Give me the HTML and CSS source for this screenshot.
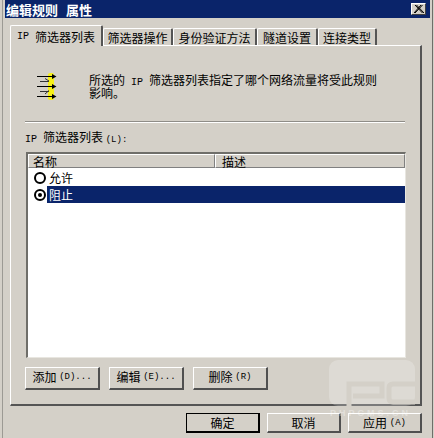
FILE: index.html
```html
<!DOCTYPE html>
<html lang="zh-CN">
<head>
  <meta charset="UTF-8" />
  <title>编辑规则 属性</title>
  <link rel="stylesheet" href="styles.css">
</head>
<body>
  <div class="dialog">
    <div class="titlebar">
      <span class="caption">编辑规则 属性</span>
      <span class="close">
        <svg width="10" height="8" viewBox="0 0 10 8"><path d="M1 0 L8.500 8 M2.500 0 L10 8 M8.500 0 L1 8 M7 0 L0 8" stroke="#000" stroke-width="1" fill="none"/></svg>
      </span>
    </div>

    <div class="tabs">
      <div class="tab active t1"><span class="en">IP </span>筛选器列表</div>
      <div class="tab t2">筛选器操作</div>
      <div class="tab t3">身份验证方法</div>
      <div class="tab t4">隧道设置</div>
      <div class="tab t5">连接类型</div>
    </div>

    <div class="panel">
      <div class="intro">
        <svg class="intro-icon" width="20" height="29" viewBox="0 0 20 29">
          <rect x="11" y="0" width="6" height="27" fill="#f6f018" rx="2"/>
          <path d="M0 3.500 H16 M0 13.500 H16 M0 23.500 H16" stroke="#000" stroke-width="1"/>
          <path d="M15 1 L19.500 3.500 L15 6 Z M15 11 L19.500 13.500 L15 16 Z M15 21 L19.500 23.500 L15 26 Z" fill="#000"/>
          <path d="M3 8.500 H12 M3 18.500 H12 M8 5.500 L12 8 M8 21 L12 17.500" stroke="#333" stroke-width="1" fill="none"/>
        </svg>
        <div class="intro-text">
          <div class="intro-line">所选的<span class="en"> IP </span>筛选器列表指定了哪个网络流量将受此规则</div>
          <div class="intro-line">影响。</div>
        </div>
      </div>
      <div class="rule"></div>
      <div class="list-label"><span class="en">IP </span>筛选器列表 <span class="key">(L):</span></div>

      <div class="list">
        <div class="list-head">
          <div class="col col-name">名称</div>
          <div class="col col-desc">描述</div>
        </div>
        <div class="row">
          <span class="radio"></span>
          <span class="row-text">允许</span>
        </div>
        <div class="row selected">
          <span class="radio on"></span>
          <span class="row-text">阻止</span>
        </div>
      </div>

      <div class="panel-buttons">
        <div class="btn b-small">添加 <span class="key">(D)...</span></div>
        <div class="btn b-small">编辑 <span class="key">(E)...</span></div>
        <div class="btn b-small">删除 <span class="key">(R)</span></div>
      </div>
    </div>

    <div class="footer">
      <div class="btn b-main default">确定</div>
      <div class="btn b-main">取消</div>
      <div class="btn b-main">应用 <span class="key">(A)</span></div>
    </div>
  </div>

  <svg class="watermark" width="90" height="60" viewBox="0 0 90 60">
    <rect x="0" y="0" width="86" height="46" rx="9" fill="#fff" opacity="0.22"/>
    <path d="M20 46 V24 H53 V36 H24 M86 24 H64 Q60 24 60 28 V38 Q60 42 64 42 H86" fill="none" stroke="#d4d0c8" stroke-width="5"/>
    <text x="1" y="56" class="wm-text">PHPCMS.CN</text>
  </svg>
</body>
</html>
```

FILE: styles.css
```css
html, body {
  margin: 0;
  padding: 0;
  width: 434px;
  height: 438px;
  overflow: hidden;
}
body {
  background: #d4d0c8;
  font-family: "Noto Sans CJK SC", "Liberation Sans", sans-serif;
  font-size: 12px;
  line-height: 12px;
  color: #000;
  position: relative;
}
.en {
  font-family: "Liberation Mono", monospace;
  font-size: 10px;
  white-space: pre;
}
.key {
  font-family: "Liberation Mono", monospace;
  font-size: 9px;
  white-space: pre;
}
.dialog {
  box-sizing: border-box;
  width: 431px;
  height: 438px;
  margin-left: 2px;
  padding: 0 10px 0 2px;
  border-left: 1px solid #9c9a94;
  border-right: 1px solid #6f6e69;
}
.titlebar {
  height: 18px;
  margin-right: -8px;
  background: #0a246a;
  display: flex;
  align-items: center;
  justify-content: space-between;
  padding: 0 4px 0 1px;
}
.caption {
  color: #fff;
  font-size: 13px;
  font-weight: bold;
  line-height: 15px;
  word-spacing: 5px;
}
.close {
  width: 15px;
  height: 12px;
  background: #d4d0c8;
  border: 1px solid;
  border-color: #fff #404040 #404040 #fff;
  box-sizing: border-box;
  display: flex;
  align-items: center;
  justify-content: center;
}

/* tabs */
.tabs {
  display: flex;
  align-items: flex-end;
  height: 27px;
  padding-left: 5px;
  box-sizing: border-box;
  position: relative;
  z-index: 2;
}
.tab {
  box-sizing: border-box;
  height: 17px;
  padding-top: 1px;
  border-top: 1px solid #fff;
  border-left: 1px solid #fff;
  border-right: 2px solid #555;
  border-radius: 2px 2px 0 0;
  display: flex;
  align-items: center;
  justify-content: center;
}
.tab.active {
  height: 21px;
  padding-top: 2px;
  margin-bottom: -1px;
  background: #d4d0c8;
}
.t1 { width: 93px; }
.t2 { width: 70px; }
.t3 { width: 84px; }
.t4 { width: 61px; }
.t5 { width: 59px; }

/* panel */
.panel {
  box-sizing: border-box;
  height: 361px;
  margin-left: 5px;
  padding: 0 15px;
  border-top: 1px solid #fff;
  border-left: 1px solid #fff;
  border-right: 2px solid #555;
  border-bottom: 2px solid #555;
}
.intro {
  display: flex;
  height: 75px;
  padding-top: 27px;
  box-sizing: border-box;
}
.intro-icon {
  margin-left: 11px;
  flex: none;
}
.intro-text {
  margin-left: 32px;
  padding-top: 1px;
  white-space: nowrap;
}
.intro-line {
  height: 12px;
  margin-bottom: 1px;
}
.rule {
  border-top: 1px solid #8f8d88;
  border-bottom: 1px solid #fff;
  margin-left: -1px;
}
.list-label {
  margin-top: 8px;
  height: 12px;
  margin-left: -1px;
}
.list {
  box-sizing: border-box;
  width: 380px;
  height: 206px;
  margin-top: 9px;
  background: #fff;
  border-top: 2px solid #6f6e69;
  border-left: 2px solid #6f6e69;
  border-right: 1px solid #e8e6e0;
  border-bottom: 1px solid #e8e6e0;
}
.list-head {
  display: flex;
  height: 14px;
  margin-bottom: 1px;
  background: #d4d0c8;
}
.col {
  box-sizing: border-box;
  border-top: 1px solid #fff;
  border-left: 1px solid #fff;
  border-right: 1px solid #808080;
  border-bottom: 1px solid #808080;
  padding-left: 4px;
  line-height: 13px;
  height: 14px;
}
.col-name { width: 187px; }
.col-desc { flex: 1; padding-left: 6px; }
.row {
  display: flex;
  align-items: center;
  height: 17px;
  padding-left: 6px;
}
.radio {
  box-sizing: border-box;
  width: 12px;
  height: 12px;
  border: 2px solid #000;
  border-radius: 50%;
  background: #fff;
  flex: none;
  position: relative;
}
.radio.on::after {
  content: "";
  position: absolute;
  left: 2px;
  top: 2px;
  width: 4px;
  height: 4px;
  border-radius: 50%;
  background: #000;
}
.row-text {
  margin-left: 1px;
  padding-left: 2px;
  line-height: 17px;
  flex: none;
}
.row.selected .row-text {
  flex: 1;
  background: #0a246a;
  color: #fff;
  height: 17px;
}

/* buttons */
.btn {
  box-sizing: border-box;
  background: #d4d0c8;
  border-top: 1px solid #fff;
  border-left: 1px solid #fff;
  border-right: 2px solid #505050;
  border-bottom: 2px solid #505050;
  display: flex;
  align-items: center;
  justify-content: center;
  white-space: pre;
}
.panel-buttons {
  display: flex;
  gap: 9px;
  margin: 9px 0 0 -1px;
}
.b-small {
  width: 75px;
  height: 23px;
  padding-bottom: 2px;
}
.footer {
  display: flex;
  justify-content: flex-end;
  gap: 7px;
  margin-top: 7px;
}
.b-main {
  width: 74px;
  height: 20px;
}
.b-main.default {
  border: 1px solid #000;
  border-right-width: 2px;
  border-bottom-width: 2px;
}

/* site logo stamped over the shot */
.watermark {
  position: absolute;
  left: 329px;
  top: 360px;
}
.wm-text {
  font-family: "Liberation Sans", sans-serif;
  font-size: 9px;
  font-weight: bold;
  letter-spacing: 3px;
  fill: #fff;
  opacity: 0.35;
}
```
